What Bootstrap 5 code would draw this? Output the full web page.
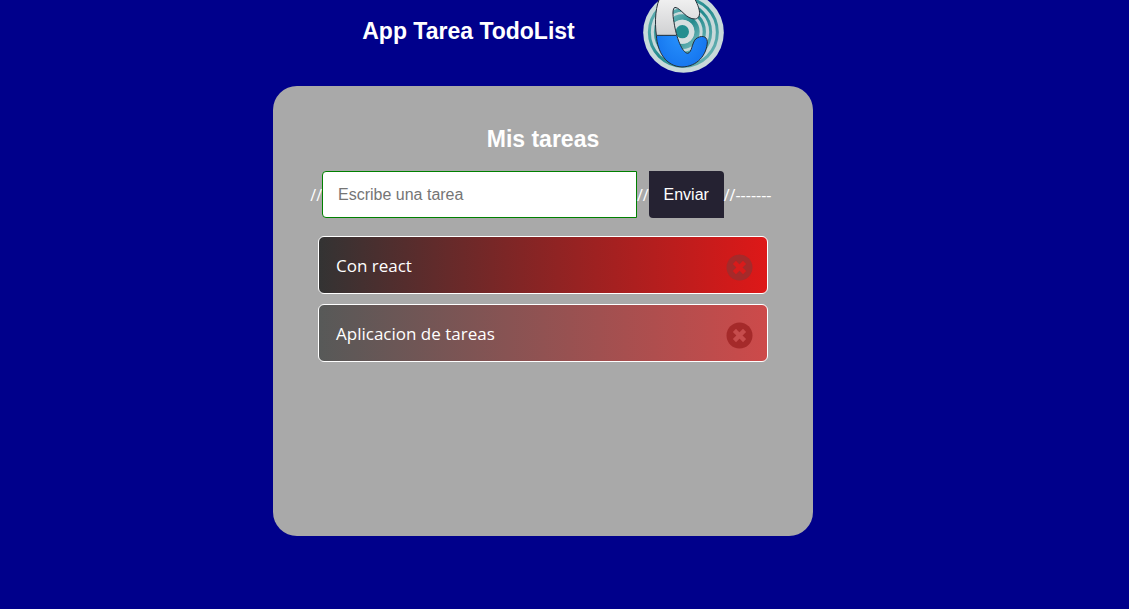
<!DOCTYPE html>
<html lang="es">
<head>
<meta charset="utf-8">
<meta name="viewport" content="width=device-width, initial-scale=1">
<title>App Tarea TodoList</title>
<link href="https://cdn.jsdelivr.net/npm/bootstrap@5.3.0/dist/css/bootstrap.min.css" rel="stylesheet">
<style>
  body { background: #00008b; color: #fff; font-family: "Open Sans", "Noto Sans", sans-serif; font-size: 16px; line-height: 24px; }
  .app { padding-right: 43px; }
  .heading { font: bold 23px/28px "Liberation Sans", Arial, sans-serif; }
  .app-header { height: 86px; gap: 68px; }
  .app-header .heading { margin-top: 17px; }
  .logo { width: 81px; height: 81px; margin-top: -8px; }
  .panel { width: 100%; max-width: 540px; min-height: 450px; padding: 39px 36px; background: #a9a9a9; border-radius: 24px; }
  .task-form { margin-top: 18px; }
  .task-input { width: 315px; height: 47px; padding: 0 15px; border: 1px solid green; border-radius: 4px 0 0 4px; font: 16px "Liberation Sans", Arial, sans-serif; }
  .task-input::placeholder { color: #757575; }
  .task-send { width: 75px; height: 47px; border: 0; border-radius: 0 4px 0 4px; background: #252232; color: #fff; font: 16px "Liberation Sans", Arial, sans-serif; }
  .form-tail { width: 52px; }
  .task-list { max-width: 450px; margin-top: 18px; gap: 10px; }
  .task { height: 58px; padding: 2px 14px 0 17px; border: 1px solid #fff; border-radius: 6px; font-size: 17px; background: linear-gradient(90deg, #333, #822525 45%, #de1818); }
  .task-hover { background: linear-gradient(90deg, #575958, #915252 50%, #cd4a4a); }
  .task-remove { border: 0; background: none; color: brown; padding: 2px 0 0; }
</style>
</head>
<body>
<main class="app d-flex flex-column align-items-center">
  <header class="app-header d-flex justify-content-center align-items-start">
    <h1 class="heading mb-0">App Tarea TodoList</h1>
    <svg class="logo" viewBox="30 -24 243 243" role="img" aria-label="Logo">
      <defs>
        <linearGradient id="silver" x1="0" y1="0" x2="0" y2="1"><stop offset="0" stop-color="#f4f4f4"/><stop offset="1" stop-color="#b4b5b8"/></linearGradient>
        <radialGradient id="blue"><stop offset="0" stop-color="#2a96ff"/><stop offset="1" stop-color="#1778f0"/></radialGradient>
        <linearGradient id="teal" x1="0" y1="0" x2="1" y2="1"><stop offset="0" stop-color="#6fb9bb"/><stop offset=".5" stop-color="#238a8d"/><stop offset="1" stop-color="#79bcbd"/></linearGradient>
        <clipPath id="top"><path d="M30-40H273V106H30Z"/></clipPath>
        <clipPath id="bottom"><path d="M30 106H273V230H30Z"/></clipPath>
      </defs>
      <circle cx="151.500" cy="97.500" r="121" fill="#c8d9da"/>
      <g fill="none" stroke="url(#teal)">
        <circle cx="151" cy="97" r="102" stroke-width="9"/>
        <circle cx="150" cy="96" r="83" stroke-width="9"/>
        <circle cx="149" cy="95" r="65" stroke-width="10"/>
        <circle cx="148" cy="95" r="44" stroke-width="16"/>
      </g>
      <circle cx="148" cy="95" r="36" fill="#d5dfe0"/>
      <circle cx="148" cy="95" r="20" fill="#238f90"/>
      <g stroke="#253039" stroke-width="3">
        <path clip-path="url(#top)" fill="url(#silver)" d="M86-16C66 15 65 65 70 106C73 155 98 199 147 201C193 200 222 164 223 125C222 107 203 105 188 117C176 130 177 158 164 160C147 158 130 113 123 67C118 42 119 24 126 22C146 25 158 58 187 57C209 52 200 20 178-16Z"/>
        <path clip-path="url(#bottom)" fill="url(#blue)" d="M86-16C66 15 65 65 70 106C73 155 98 199 147 201C193 200 222 164 223 125C222 107 203 105 188 117C176 130 177 158 164 160C147 158 130 113 123 67C118 42 119 24 126 22C146 25 158 58 187 57C209 52 200 20 178-16Z"/>
        <path d="M71 106H130"/>
      </g>
    </svg>
  </header>

  <section class="panel">
    <h2 class="heading text-center mb-0">Mis tareas</h2>
    <form class="task-form d-flex justify-content-center align-items-center">
      <span>//</span>
      <input class="task-input" type="text" placeholder="Escribe una tarea" aria-label="Escribe una tarea">
      <span>//</span>
      <button class="task-send" type="button">Enviar</button>
      <span class="form-tail flex-shrink-0">//-------</span>
    </form>
    <ul class="task-list list-unstyled d-flex flex-column mx-auto mb-0">
      <li class="task d-flex align-items-center justify-content-between">
        <span>Con react</span>
        <button class="task-remove d-flex" type="button" aria-label="Eliminar Con react">
          <svg width="27" height="27" viewBox="0 0 27 27"><circle cx="13.500" cy="13.500" r="13" fill="currentColor"/><path d="M10 10L17 17M17 10L10 17" stroke="#d91b1b" stroke-width="4.500" stroke-linecap="square"/></svg>
        </button>
      </li>
      <li class="task task-hover d-flex align-items-center justify-content-between">
        <span>Aplicacion de tareas</span>
        <button class="task-remove d-flex" type="button" aria-label="Eliminar Aplicacion de tareas">
          <svg width="27" height="27" viewBox="0 0 27 27"><circle cx="13.500" cy="13.500" r="13" fill="currentColor"/><path d="M10 10L17 17M17 10L10 17" stroke="#c64c4c" stroke-width="4.500" stroke-linecap="square"/></svg>
        </button>
      </li>
    </ul>
  </section>
</main>
<script src="https://cdn.jsdelivr.net/npm/bootstrap@5.3.0/dist/js/bootstrap.bundle.min.js"></script>
</body>
</html>
